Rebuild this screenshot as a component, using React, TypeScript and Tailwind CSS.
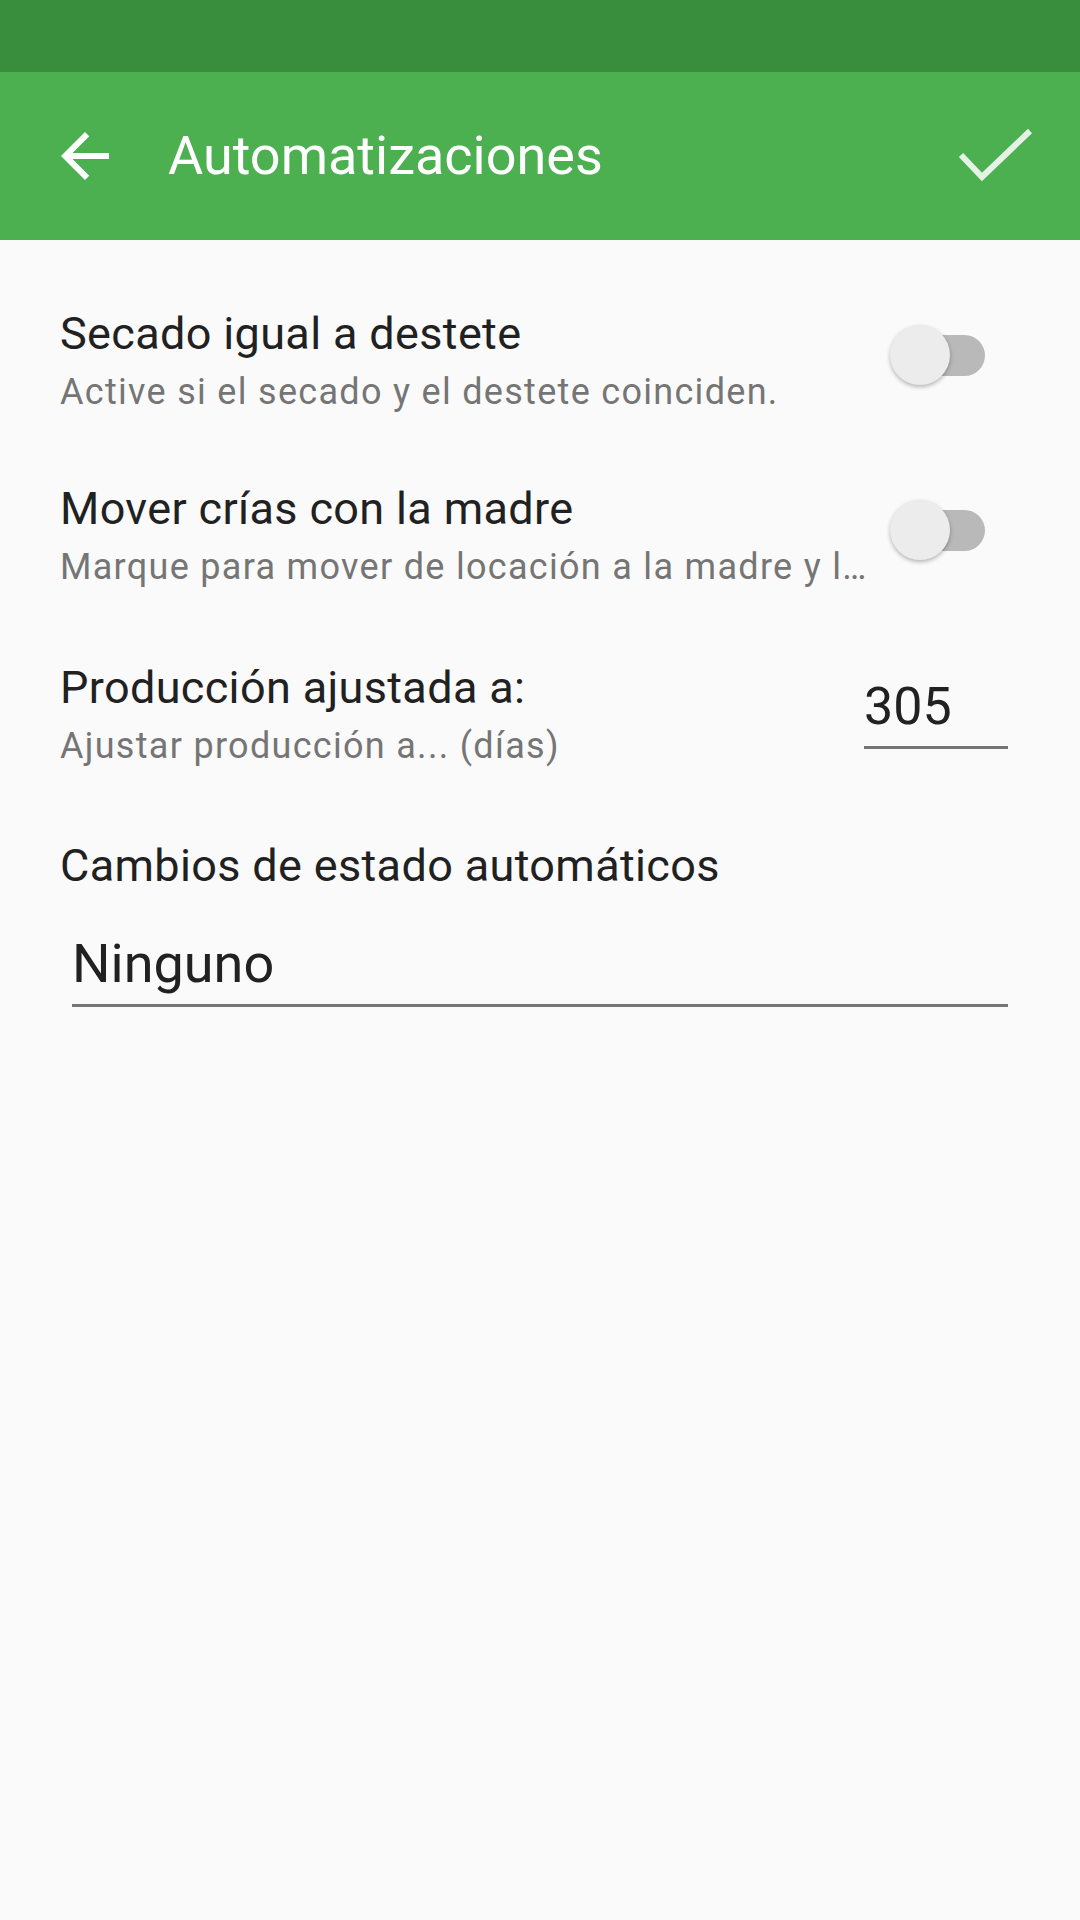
import React from 'react';

const Toggle = () => (
    <div className="relative w-[95px] h-[60px] shrink-0 mt-[18px] mr-[23px]">
        <div className="absolute right-0 top-[10px] h-[41px] w-[84px] rounded-full bg-[#B9B9B9]" />
        <div className="absolute left-0 top-0 w-[60px] h-[60px] rounded-full bg-[#ECECEC] shadow-[0_2px_4px_rgba(0,0,0,0.28)]" />
    </div>
);

interface RowProps {
    title: string;
    subtitle: string;
    pt: string;
    right: React.ReactNode;
}

const SettingRow = ({ title, subtitle, pt, right }: RowProps) => (
    <div className={`flex items-start ${pt}`}>
        <div className="flex-1 min-w-0">
            <div className="text-[45px] leading-[54px] tracking-[0.35px] text-[#212121] whitespace-nowrap">{title}</div>
            <div className="mt-[9px] text-[36px] leading-[44px] tracking-[1.3px] text-[#757575] whitespace-nowrap">{subtitle}</div>
        </div>
        {right}
    </div>
);

export default function App() {
    return (
        <div className="w-[1080px] min-h-[1920px] bg-[#FAFAFA] font-['Roboto',sans-serif]">
            <div className="h-[72px] bg-[#388E3C]" />
            <header className="h-[168px] bg-[#4CAF50] flex items-center">
                <svg className="ml-[49px] w-[72px] h-[72px]" viewBox="0 0 24 24" fill="#ffffff">
                    <path d="M20 11H7.83l5.59-5.59L12 4l-8 8 8 8 1.41-1.41L7.83 13H20v-2z" />
                </svg>
                <h1 className="ml-[47px] text-[54px] leading-[64px] text-white font-normal">Automatizaciones</h1>
                <svg className="ml-auto mr-[46px] w-[76px] h-[56px]" viewBox="0 0 76 56" fill="none">
                    <polyline points="3,27 24,49 72,3" stroke="#E4F3E5" strokeWidth="6" />
                </svg>
            </header>
            <main className="pl-[60px] pr-[72px]">
                <SettingRow
                    pt="pt-[67px]"
                    title="Secado igual a destete"
                    subtitle="Active si el secado y el destete coinciden."
                    right={<Toggle />}
                />
                <SettingRow
                    pt="pt-[68px]"
                    title="Mover crías con la madre"
                    subtitle="Marque para mover de locación a la madre y l…"
                    right={<Toggle />}
                />
                <SettingRow
                    pt="pt-[72px]"
                    title="Producción ajustada a:"
                    subtitle="Ajustar producción a... (días)"
                    right={
                        <div className="mt-[15px] w-[144px] shrink-0 border-b-[3px] border-[#757575] pb-[8px] text-[52px] leading-[62px] text-[#212121]">
                            305
                        </div>
                    }
                />
                <div className="pt-[71px] text-[45px] leading-[54px] tracking-[0.35px] text-[#212121]">Cambios de estado automáticos</div>
                <div className="mt-[39px] ml-[12px] border-b-[3px] border-[#757575] pb-[8px] text-[54px] leading-[64px] text-[#212121]">
                    Ninguno
                </div>
            </main>
        </div>
    );
}
